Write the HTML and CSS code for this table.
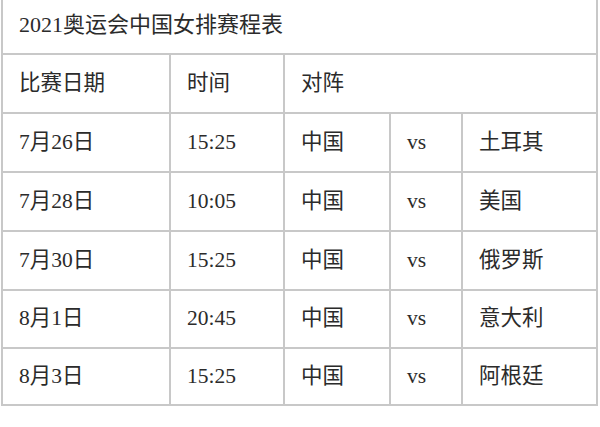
FILE: index.html
```html
<!DOCTYPE html>
<html lang="zh">
<head>
<meta charset="utf-8">
<link rel="stylesheet" href="styles.css">
</head>
<body>
<table class="sched">
  <colgroup>
    <col class="c1"><col class="c2"><col class="c3"><col class="c4"><col class="c5">
  </colgroup>
  <tr class="r-title"><td colspan="5" class="title">2021奥运会中国女排赛程表</td></tr>
  <tr class="r"><td>比赛日期</td><td>时间</td><td colspan="3">对阵</td></tr>
  <tr class="r"><td>7月26日</td><td>15:25</td><td>中国</td><td>vs</td><td>土耳其</td></tr>
  <tr class="r"><td>7月28日</td><td>10:05</td><td>中国</td><td>vs</td><td>美国</td></tr>
  <tr class="r"><td>7月30日</td><td>15:25</td><td>中国</td><td>vs</td><td>俄罗斯</td></tr>
  <tr class="r r-58"><td>8月1日</td><td>20:45</td><td>中国</td><td>vs</td><td>意大利</td></tr>
  <tr class="r r-57"><td>8月3日</td><td>15:25</td><td>中国</td><td>vs</td><td>阿根廷</td></tr>
</table>
</body>
</html>
```

FILE: styles.css
```css
html, body {
  margin: 0;
  padding: 0;
  background: #ffffff;
  overflow: hidden;
}
body {
  width: 600px;
  height: 427px;
}
.sched {
  border-collapse: collapse;
  table-layout: fixed;
  width: 596px;
  margin: -6px 0 0 1px;
  font-family: "Liberation Serif", "Noto Sans CJK SC", serif;
  color: #2b2b2b;
  font-size: 21.5px;
}
.c1 { width: 168px; }
.c2 { width: 114px; }
.c3 { width: 106px; }
.c4 { width: 72px; }
.c5 { width: 135px; }
.sched td {
  border: 2px solid #c8c8c8;
  padding: 0 0 0 16px;
  height: 59px;
  box-sizing: border-box;
  vertical-align: middle;
  white-space: nowrap;
  line-height: 1;
}
.sched td.title {
  font-size: 22px;
  padding-left: 16px;
  padding-top: 1px;
}
.r-58 td { height: 58px; }
.r-57 td { height: 57px; }
```
